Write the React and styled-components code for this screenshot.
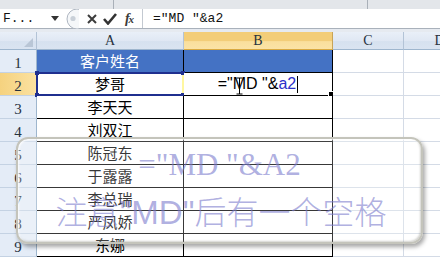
import React from 'react';
import styled, { createGlobalStyle } from 'styled-components';

const Global = createGlobalStyle`
  html, body { margin: 0; padding: 0; background: #fff; }
  body { width: 440px; height: 258px; overflow: hidden; }
`;

const Page = styled.div`
  position: relative;
  width: 440px;
  height: 258px;
  overflow: hidden;
  display: flex;
  flex-direction: column;
  background: #fff;
  font-family: "Liberation Sans", "Noto Sans CJK SC", sans-serif;
`;

const TopStrip = styled.div`
  height: 9px;
  flex: none;
  display: flex;
  background: #e3e6ea;
`;

const StripSeg = styled.div`
  width: ${p => p.$w}px;
  flex: none;
  border-right: 1px solid #a9b0b8;
  box-sizing: border-box;
`;

const FormulaBar = styled.div`
  height: 20px;
  flex: none;
  display: flex;
  align-items: center;
  background: #fff;
  border-bottom: 1px solid #a9b1bb;
  box-sizing: border-box;
`;

const NameBox = styled.div`
  width: 63px;
  height: 100%;
  flex: none;
  display: flex;
  align-items: center;
  justify-content: space-between;
  padding: 0 4px 0 3px;
  box-sizing: border-box;
  font-family: "Liberation Mono", monospace;
  font-size: 13px;
  color: #111;
`;

const IconSlot = styled.div`
  width: ${p => p.$w}px;
  flex: none;
  display: flex;
  align-items: center;
  justify-content: center;
`;

const Fx = styled.span`
  font-family: "Liberation Serif", serif;
  font-style: italic;
  font-weight: bold;
  color: #3a3a3a;
  font-size: 14px;
  letter-spacing: -1px;
  & small { font-size: 11px; }
`;

const BarDivider = styled.div`
  width: 1px;
  height: 100%;
  flex: none;
  background: #c3c9d1;
`;

const FormulaText = styled.div`
  padding-left: 10px;
  font-family: "Liberation Mono", monospace;
  font-size: 13px;
  color: #111;
  white-space: pre;
`;

const Gap = styled.div`
  height: 3px;
  flex: none;
  background: #e6eaf0;
`;

const Sheet = styled.div`
  display: grid;
  grid-template-columns: 37px 147px 149px 71px 72px;
  grid-template-rows: 18px repeat(9, 23px);
`;

const ColHead = styled.div`
  box-sizing: border-box;
  border-right: 1px solid ${p => (p.$active ? '#c8a458' : '#b3c3d6')};
  border-bottom: 1px solid ${p => (p.$active ? '#d9a940' : '#9eb6ce')};
  background: ${p =>
    p.$active
      ? 'linear-gradient(#f3cd78 0%, #f3cd78 55%, #fadf9c 56%, #fbe3a6 100%)'
      : 'linear-gradient(#e9eff8 0%, #dfe7f3 55%, #d6e1ef 56%, #dae4f1 100%)'};
  display: flex;
  align-items: center;
  justify-content: center;
  font-family: "Liberation Serif", serif;
  font-size: 14px;
  color: #27313d;
  position: relative;
  white-space: nowrap;
`;

const CornerMark = styled.div`
  position: absolute;
  right: 3px;
  bottom: 2px;
  width: 0;
  height: 0;
  border-left: 9px solid transparent;
  border-bottom: 9px solid #b9c6d6;
`;

const RowHead = styled.div`
  box-sizing: border-box;
  border-right: 1px solid #9eb6ce;
  border-bottom: 1px solid #c4d2e3;
  background: ${p => (p.$active ? 'linear-gradient(90deg,#f5d27f,#fbe1a0)' : '#e4ecf7')};
  display: flex;
  align-items: flex-end;
  justify-content: center;
  padding-bottom: 1px;
  font-family: "Liberation Serif", serif;
  font-size: 15px;
  line-height: 16px;
  color: #27313d;
`;

const Cell = styled.div`
  position: relative;
  box-sizing: border-box;
  border-right: 1px solid ${p => (p.$table ? '#000' : '#d4dbe6')};
  border-bottom: 1px solid ${p => (p.$table ? '#000' : '#d4dbe6')};
  background: ${p => (p.$head ? '#4472c4' : '#fff')};
  color: ${p => (p.$head ? '#fff' : '#000')};
  display: flex;
  align-items: center;
  justify-content: center;
  font-family: "Noto Sans CJK SC", sans-serif;
  font-size: 15px;
  line-height: 18px;
  white-space: nowrap;
`;

const RefBox = styled.div`
  position: absolute;
  left: -1px;
  top: -1px;
  right: -1px;
  bottom: -1px;
  border: 2px solid #1f2f8f;
  border-right-color: #fff7a0;
  pointer-events: none;
`;

const Handle = styled.div`
  position: absolute;
  width: 4px;
  height: 4px;
  background: #1f2f8f;
  ${p => (p.$top ? 'top: -3px;' : 'bottom: -3px;')}
  ${p => (p.$left ? 'left: -3px;' : 'right: -3px;')}
`;

const EditText = styled.span`
  font-family: "Liberation Sans", sans-serif;
  font-size: 16px;
  color: #000;
  position: relative;
  & b { font-weight: normal; color: #2b30c8; }
`;

const Caret = styled.span`
  display: inline-block;
  width: 1px;
  height: 17px;
  background: #000;
  margin-left: 1px;
  vertical-align: -3px;
`;

const IBeam = styled.svg`
  position: absolute;
  left: 18px;
  top: 2px;
`;

const FillHandle = styled.div`
  position: absolute;
  right: -3px;
  bottom: -3px;
  width: 5px;
  height: 5px;
  background: #000;
  border: 1px solid #fff;
`;

const Callout = styled.div`
  position: absolute;
  left: 16px;
  top: 137px;
  width: 407px;
  height: 107px;
  box-sizing: border-box;
  border-radius: 12px;
  border: 2px solid #c4c4bb;
  background: rgba(255, 255, 255, 0.22);
  box-shadow: 2px 3px 4px rgba(0, 0, 0, 0.35), inset 1px 1px 2px rgba(255, 255, 255, 0.9),
    inset -1px -1px 2px rgba(120, 120, 110, 0.35);
  display: flex;
  flex-direction: column;
  align-items: center;
  padding-top: 9px;
  color: rgba(125, 125, 205, 0.62);
`;

const CalloutLine1 = styled.div`
  font-family: "Liberation Serif", serif;
  font-size: 31px;
  line-height: 34px;
  white-space: pre;
`;

const CalloutLine2 = styled.div`
  font-family: "Noto Sans CJK SC", sans-serif;
  font-weight: 300;
  font-size: 32px;
  line-height: 40px;
  margin-top: 8px;
  white-space: pre;
  margin-left: 3px;
  & span {
    font-family: "Liberation Sans", sans-serif;
    font-weight: normal;
    font-size: 33px;
  }
`;

const names = ['梦哥', '李天天', '刘双江', '陈冠东', '于露露', '李总瑞', '严凤娇', '东娜'];

export default function App() {
  return (
    <Page>
      <Global />
      <TopStrip>
        <StripSeg $w={114} />
        <StripSeg $w={254} />
      </TopStrip>
      <FormulaBar>
        <NameBox>
          <span>F...</span>
          <svg width="8" height="5" viewBox="0 0 8 5">
            <path d="M0 0 L8 0 L4 5 Z" fill="#333" />
          </svg>
        </NameBox>
        <IconSlot $w={16}>
          <svg width="16" height="20" viewBox="0 0 16 20">
            <circle cx="14" cy="10" r="10" fill="#f5f7f9" stroke="#aeb6c1" strokeWidth="1" />
            <circle cx="10" cy="9.5" r="2.6" fill="#c9d0d8" />
          </svg>
        </IconSlot>
        <IconSlot $w={6} />
        <IconSlot $w={14}>
          <svg width="10" height="10" viewBox="0 0 10 10">
            <path d="M1 1 L9 9 M9 1 L1 9" stroke="#3c3c3c" strokeWidth="2" />
          </svg>
        </IconSlot>
        <IconSlot $w={22}>
          <svg width="14" height="12" viewBox="0 0 14 12">
            <path d="M1 6 L5 10.5 L13 1" stroke="#333" strokeWidth="2.6" fill="none" />
          </svg>
        </IconSlot>
        <IconSlot $w={16}>
          <Fx>f<small>x</small></Fx>
        </IconSlot>
        <IconSlot $w={5} />
        <BarDivider />
        <FormulaText>{'=″MD ″&a2'}</FormulaText>
      </FormulaBar>
      <Gap />
      <Sheet>
        <ColHead>
          <CornerMark />
        </ColHead>
        <ColHead>A</ColHead>
        <ColHead $active>B</ColHead>
        <ColHead>C</ColHead>
        <ColHead>D</ColHead>

        <RowHead>1</RowHead>
        <Cell $table $head>客户姓名</Cell>
        <Cell $table $head />
        <Cell />
        <Cell />

        {names.map((n, i) => {
          const row = i + 2;
          const isEdit = row === 2;
          return (
            <React.Fragment key={n}>
              <RowHead $active={isEdit}>{row}</RowHead>
              <Cell $table>
                {n}
                {isEdit && (
                  <RefBox>
                    <Handle $top $left />
                    <Handle $top />
                    <Handle $left />
                    <Handle />
                  </RefBox>
                )}
              </Cell>
              <Cell $table>
                {isEdit && (
                  <>
                    <EditText>
                      {'="MD "&'}
                      <b>a2</b>
                      <IBeam width="7" height="18" viewBox="0 0 7 18">
                        <path d="M0.5 1 H6.5 M3.5 1 V17 M0.5 17 H6.5" stroke="#000" strokeWidth="1" fill="none" />
                      </IBeam>
                    </EditText>
                    <Caret />
                    <FillHandle />
                  </>
                )}
              </Cell>
              <Cell />
              <Cell />
            </React.Fragment>
          );
        })}
      </Sheet>
      <Callout>
        <CalloutLine1>{'="MD "&A2'}</CalloutLine1>
        <CalloutLine2>
          注意<span>"MD"</span>后有一个空格
        </CalloutLine2>
      </Callout>
    </Page>
  );
}
